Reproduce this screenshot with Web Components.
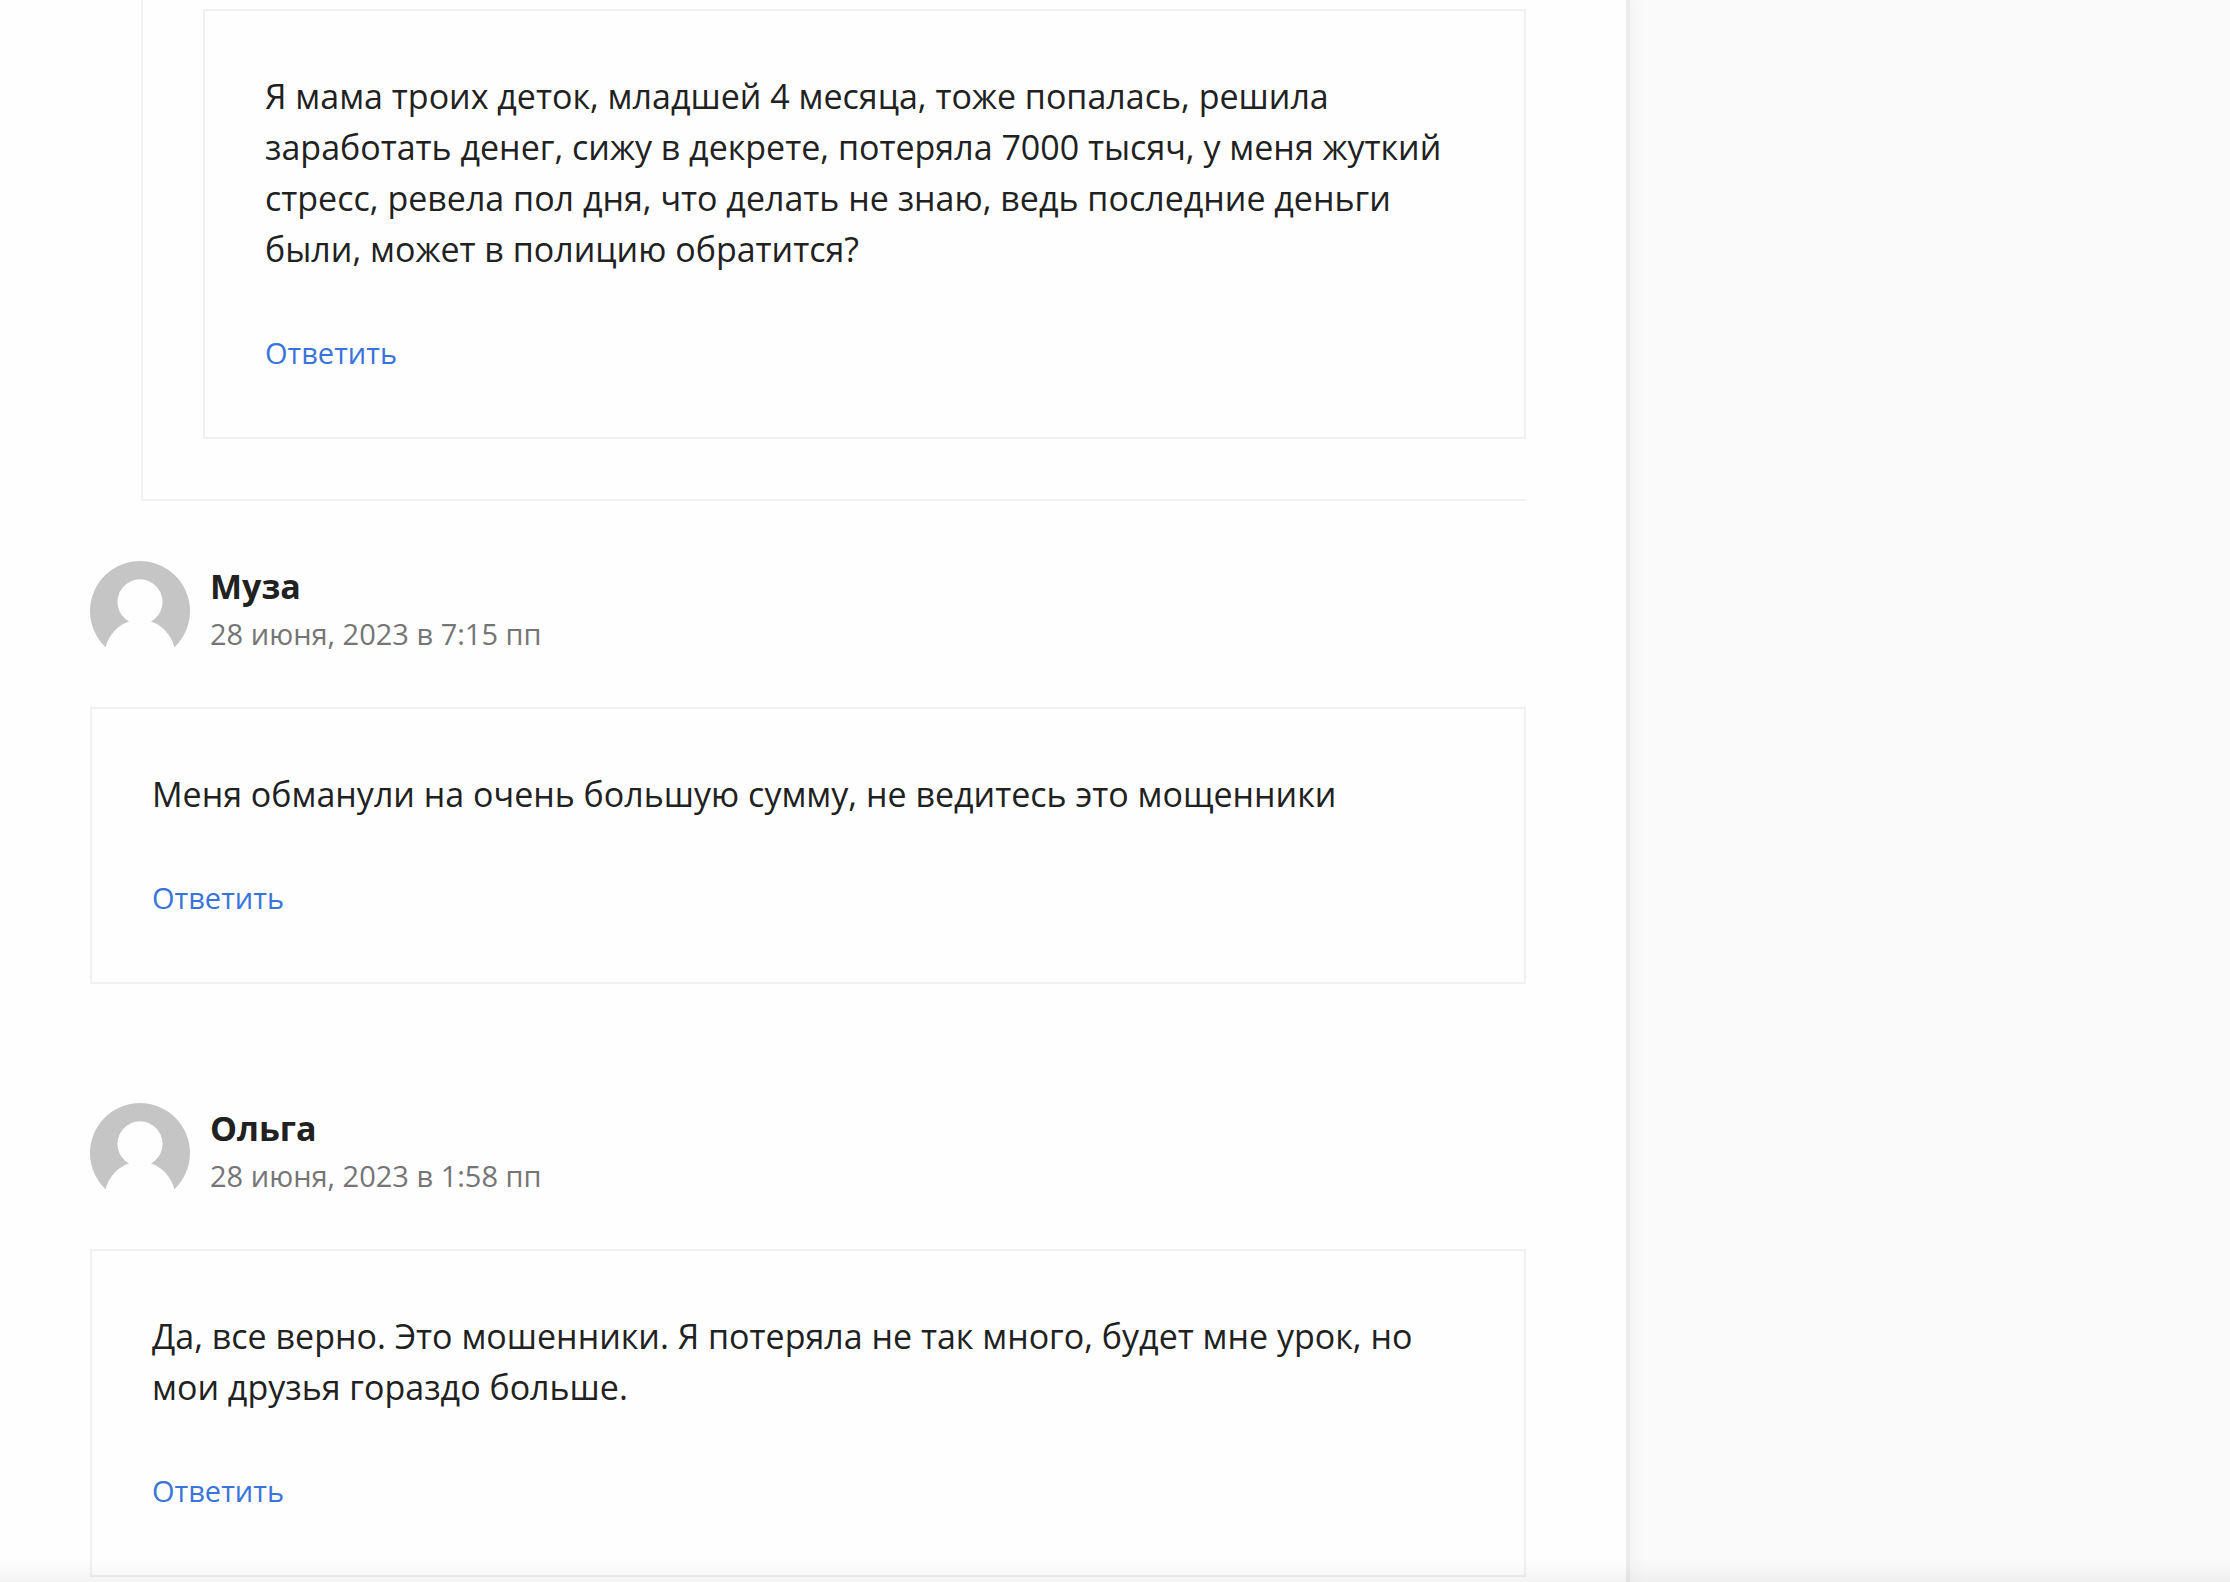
<!DOCTYPE html>
<html lang="ru">
<head>
<meta charset="utf-8">
<title>Комментарии</title>
<style>
body{margin:0;background:#fafafa;color:#212121;font:34px/51px "Open Sans","Noto Sans",sans-serif}
</style>
</head>
<body>
<comments-page>
  <comment-thread>
    <comment-card>Я мама троих деток, младшей 4 месяца, тоже попалась, решила заработать денег, сижу в декрете, потеряла 7000 тысяч, у меня жуткий стресс, ревела пол дня, что делать не знаю, ведь последние деньги были, может в полицию обратится?</comment-card>
  </comment-thread>
  <user-comment>
    <span slot="name">Муза</span>
    <span slot="date">28 июня, 2023 в 7:15 пп</span>
    Меня обманули на очень большую сумму, не ведитесь это мощенники
  </user-comment>
  <user-comment>
    <span slot="name">Ольга</span>
    <span slot="date">28 июня, 2023 в 1:58 пп</span>
    Да, все верно. Это мошенники. Я потеряла не так много, будет мне урок, но мои друзья гораздо больше.
  </user-comment>
</comments-page>
<script>
function define(name, html) {
  const template = document.createElement('template');
  template.innerHTML = html;
  customElements.define(name, class extends HTMLElement {
    constructor() {
      super();
      this.attachShadow({ mode: 'open' }).append(template.content.cloneNode(true));
    }
  });
}

define('comments-page', `
  <style>
    :host{display:flex;min-height:100vh}
    main{flex:1;min-width:0;box-sizing:border-box;padding:0 100px 0 90px;background:#fefefe;
      box-shadow:0 0 0 4px #ececec,0 0 20px 4px rgba(0,0,0,.05);
      display:flex;flex-direction:column}
    aside{width:604px}
    .fade{position:fixed;left:0;right:0;bottom:0;height:24px;
      background:linear-gradient(to top,rgba(0,0,0,.045),rgba(0,0,0,.015) 50%,transparent);pointer-events:none}
  </style>
  <main><slot></slot></main>
  <aside></aside>
  <div class="fade"></div>`);

define('comment-thread', `
  <style>
    :host{display:block;margin:0 0 60px 51px;padding:9px 0 60px 60px;border:solid #f1f1f1;border-width:0 0 2px 2px}
  </style>
  <slot></slot>`);

define('comment-card', `
  <style>
    :host{display:block;padding:60px;border:2px solid #f1f1f1}
    p{margin:0 0 51px}
    a{font-size:29px;line-height:43px;color:#3974db;text-decoration:none}
  </style>
  <p><slot></slot></p>
  <div><a href="#respond">Ответить</a></div>`);

define('user-avatar', `
  <style>
    :host{display:block;width:100px;height:100px}
    svg{display:block;width:100%;height:100%}
  </style>
  <svg viewBox="0 0 100 100" aria-hidden="true">
    <path fill="#c5c5c5" d="M15.500 86.200A50 50 0 1 1 84.500 86.200C81 73.500 72 64 61 60.500A22.500 22.500 0 1 0 39 60.500C28 64 19 73.500 15.500 86.200z"/>
  </svg>`);

define('user-comment', `
  <style>
    :host{display:block}
    :host(:not(:last-child)){margin-bottom:119px}
    header{display:flex;gap:20px;margin-bottom:46px;height:100px}
    .name{font-weight:700}
    .date{font-size:29px;line-height:43px;color:#757575}
  </style>
  <article>
    <header>
      <user-avatar></user-avatar>
      <div>
        <div class="name"><slot name="name"></slot></div>
        <div class="date"><slot name="date"></slot></div>
      </div>
    </header>
    <comment-card><slot></slot></comment-card>
  </article>`);
</script>
</body>
</html>
